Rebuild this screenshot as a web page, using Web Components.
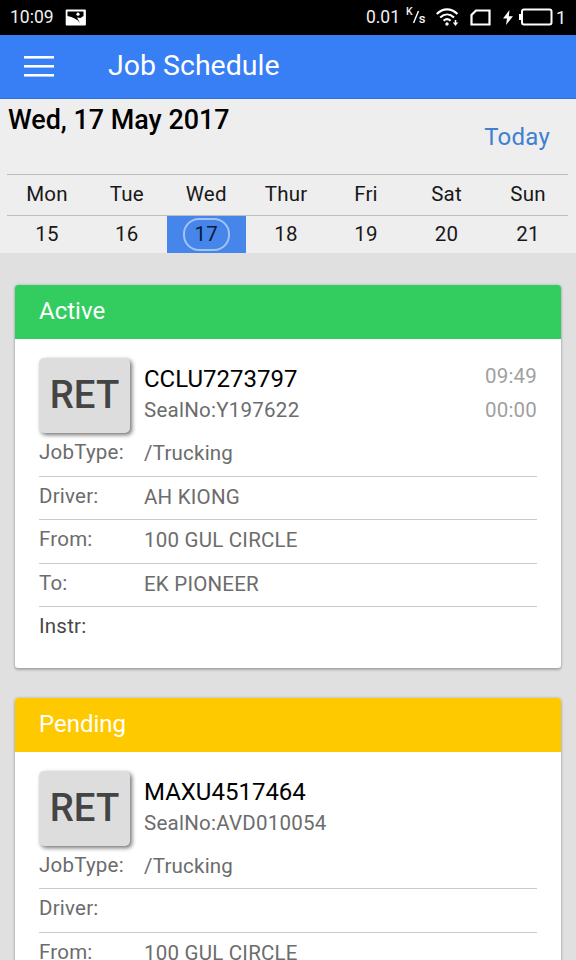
<!DOCTYPE html>
<html lang="en">
<head>
<meta charset="utf-8">
<title>Job Schedule</title>
<style>
  html, body {
    margin: 0;
    height: 960px;
    overflow: hidden;
    background: #e0e0e0;
    font-family: Roboto, "Liberation Sans", sans-serif;
  }
</style>
</head>
<body>
<job-app></job-app>

<script>
class StatusBar extends HTMLElement {
  constructor() {
    super();
    this.attachShadow({ mode: 'open' });
    this.shadowRoot.innerHTML = `
      <style>
        :host {
          display: flex;
          align-items: center;
          height: 35px;
          box-sizing: border-box;
          padding: 0 10px 1px;
          background: #000;
          color: #f0f0f0;
          font-size: 17.5px;
        }
        svg { display: block; flex: none; }
        .picture { margin-left: 11px; }
        .speed { margin-left: auto; font-size: 17.5px; }
        .unit { display: flex; margin-left: 6px; font-weight: 500; line-height: 12px; width: 19px; }
        .unit span:first-child { margin-top: -3px; font-size: 10.5px; }
        .unit span:last-child { margin-top: 4px; font-size: 13px; }
        .unit svg { margin: 0 -1px; }
        .wifi { margin-left: 11px; }
        .sim { margin-left: 11px; }
        .bolt { margin-left: 12px; }
        .battery { margin-left: 6px; }
        .level { margin-left: 3px; width: 10px; font-size: 18px; }
      </style>
      <span>10:09</span>
      <svg class="picture" width="22" height="17" viewBox="0 0 22 17">
        <rect x="0.7" y="0.6" width="20.2" height="15.8" rx="1" fill="#fff"/>
        <path d="M2.5 2.5h16v4.500L15.500 9 12 8.500l3 5.500C12 10 8 8 2.500 7z" fill="#000"/>
        <circle cx="13" cy="5.200" r="1.600" fill="#fff"/>
      </svg>
      <span class="speed">0.01</span>
      <span class="unit"><span>K</span><svg width="8" height="15" viewBox="0 0 8 15"><path d="M1.500 14L6.500 2" stroke="#fff" stroke-width="1.400"/></svg><span>s</span></span>
      <svg class="wifi" width="23" height="19" viewBox="0 0 23 19" fill="none" stroke="#fff" stroke-width="2.200">
        <path d="M0.800 6C7-0.300 15-0.300 21.500 6M4.200 9.500c4.200-4 9.600-4 13.800 0M7.600 12.800c2.200-2 4.800-2 7 0"/>
        <circle cx="11" cy="16" r="1.700" fill="#fff" stroke="none"/>
        <path d="M19.500 12v4" stroke-width="1.600"/>
        <path d="M16.800 14.500h5.400l-2.700 3.500z" fill="#fff" stroke="none"/>
      </svg>
      <svg class="sim" width="21" height="17" viewBox="0 0 21 17" fill="none" stroke="#fff" stroke-width="2.200">
        <path d="M6 1.500h13.500v14h-18V6z"/>
      </svg>
      <svg class="bolt" width="10" height="15" viewBox="0 0 10 15" fill="#fff"><path d="M6.500 0L0 8.500h4L3 15l7-8.800H5.800z"/></svg>
      <svg class="battery" width="34" height="18" viewBox="0 0 34 18">
        <rect x="3" y="1.500" width="29.500" height="15" rx="2" fill="none" stroke="#fff" stroke-width="2"/>
        <path d="M0 6h3v6H0z" fill="#fff"/>
      </svg>
      <span class="level">1</span>
    `;
  }
}

class TitleBar extends HTMLElement {
  constructor() {
    super();
    this.attachShadow({ mode: 'open' });
    this.shadowRoot.innerHTML = `
      <style>
        :host {
          display: flex;
          align-items: center;
          height: 64px;
          box-sizing: border-box;
          padding: 0 24px 2px;
          background: #387ef5;
          border-bottom: 1px solid #3371dc;
          color: #fff;
        }
        .menu { display: grid; gap: 7px; width: 30px; margin-right: 54px; padding-top: 1px; }
        .menu i { height: 2px; border-bottom: 1px solid #a9c8fa; margin-bottom: -1px; background: #fff; }
        h1 { margin: 0; font-size: 28.500px; font-weight: 400; line-height: 40px; }
      </style>
      <div class="menu"><i></i><i></i><i></i></div>
      <h1><slot></slot></h1>
    `;
  }
}

class WeekCalendar extends HTMLElement {
  connectedCallback() {
    this.attachShadow({ mode: 'open' });
    const days = ['Mon', 'Tue', 'Wed', 'Thur', 'Fri', 'Sat', 'Sun'];
    const first = Number(this.getAttribute('first'));
    const selected = Number(this.getAttribute('selected'));
    this.shadowRoot.innerHTML = `
      <style>
        :host {
          display: block;
          height: 154px;
          box-sizing: border-box;
          padding: 0 8px 0 7px;
          background: #eee;
          color: #181818;
        }
        .top { display: flex; justify-content: space-between; height: 75px; }
        h2 { margin: 1px 0 0 1px; font-size: 26.900px; font-weight: 500; line-height: 40px; color: #000; }
        .today { margin: 18px 18px 0 0; font-size: 24px; letter-spacing: .25px; line-height: 40px; color: #3f80d0; }
        .week {
          display: grid;
          grid-template-columns: 80px 79.500px 79.500px 80px 80px 81px 1fr;
          border-top: 1px solid #bdbdbd;
          text-align: center;
          font-size: 20.500px;
          letter-spacing: .2px;
        }
        .names { height: 40px; line-height: 38px; }
        .names div:last-child, .dates div:last-child { padding-left: 1px; }
        .dates { height: 37px; line-height: 37px; }
        .on { display: grid; place-items: center; background: #4686ea; }
        .on span {
          width: 43px;
          height: 29px;
          border: 2px solid #a4c3f4;
          border-radius: 16px;
          line-height: 28px;
          color: #0b1830;
        }
      </style>
      <div class="top">
        <h2><slot></slot></h2>
        <div class="today">Today</div>
      </div>
      <div class="week names">${days.map(d => `<div>${d}</div>`).join('')}</div>
      <div class="week dates">${days.map((d, i) => {
        const n = first + i;
        return n === selected ? `<div class="on"><span>${n}</span></div>` : `<div>${n}</div>`;
      }).join('')}</div>
    `;
  }
}

class JobRow extends HTMLElement {
  connectedCallback() {
    this.attachShadow({ mode: 'open' });
    this.shadowRoot.innerHTML = `
      <style>
        :host {
          display: grid;
          grid-template-columns: 105px 1fr;
          height: 43.500px;
          box-sizing: border-box;
          border-bottom: 1px solid #c9c9c9;
          font-size: 20.500px;
          letter-spacing: .22px;
          color: #6c6c6c;
        }
        :host([last]) { border: 0; color: #484848; }
        .label { line-height: 38px; }
        .value { line-height: 41px; }
      </style>
      <div class="label">${this.getAttribute('label')}</div>
      <div class="value"><slot></slot></div>
    `;
  }
}

class JobCard extends HTMLElement {
  connectedCallback() {
    this.attachShadow({ mode: 'open' });
    const times = (this.getAttribute('times') || '').split(' ').filter(Boolean);
    this.shadowRoot.innerHTML = `
      <style>
        :host {
          display: block;
          height: 382.500px;
          border-radius: 3px;
          overflow: hidden;
          background: #fff;
          box-shadow: 0 2px 3px rgba(0, 0, 0, .22), 0 0 3px rgba(0, 0, 0, .2);
        }
        header {
          height: 54px;
          padding: 0 24px;
          background: var(--status-color);
          color: #fff;
          font-size: 24px;
          line-height: 53px;
        }
        .body { padding: 19px 24px 0; }
        .summary { display: flex; height: 75px; }
        .badge {
          width: 91px;
          height: 75px;
          border-radius: 5px;
          background: #ddd;
          box-shadow: 2px 2px 4px rgba(0, 0, 0, .55);
          color: #444;
          font-size: 38.300px;
          font-weight: 500;
          line-height: 73px;
          text-align: center;
        }
        .info { flex: 1; margin-left: 14px; padding-top: 6px; }
        .container { font-size: 24px; line-height: 31px; color: #000; }
        .seal { font-size: 20.500px; letter-spacing: .25px; line-height: 31px; color: #6c6c6c; }
        .times { padding-top: .5px; font-size: 20.500px; letter-spacing: .2px; line-height: 34.500px; color: #a0a0a0; }
      </style>
      <header>${this.getAttribute('status')}</header>
      <div class="body">
        <div class="summary">
          <div class="badge">RET</div>
          <div class="info">
            <div class="container">${this.getAttribute('container')}</div>
            <div class="seal">SealNo:${this.getAttribute('seal')}</div>
          </div>
          <div class="times">${times.map(t => `<div>${t}</div>`).join('')}</div>
        </div>
        <slot></slot>
      </div>
    `;
  }
}

class JobApp extends HTMLElement {
  constructor() {
    super();
    this.attachShadow({ mode: 'open' });
    this.shadowRoot.innerHTML = `
      <style>
        :host { display: block; width: 576px; height: 960px; overflow: hidden; }
        main { display: grid; gap: 30px; padding: 32px 15px; }
        .active { --status-color: #33cd5f; }
        .pending { --status-color: #ffc900; }
      </style>
      <status-bar></status-bar>
      <title-bar>Job Schedule</title-bar>
      <week-calendar first="15" selected="17">Wed, 17 May 2017</week-calendar>
      <main>
        <job-card class="active" status="Active" container="CCLU7273797" seal="Y197622" times="09:49 00:00">
          <job-row label="JobType:">/Trucking</job-row>
          <job-row label="Driver:">AH KIONG</job-row>
          <job-row label="From:">100 GUL CIRCLE</job-row>
          <job-row label="To:">EK PIONEER</job-row>
          <job-row label="Instr:" last></job-row>
        </job-card>
        <job-card class="pending" status="Pending" container="MAXU4517464" seal="AVD010054">
          <job-row label="JobType:">/Trucking</job-row>
          <job-row label="Driver:"></job-row>
          <job-row label="From:">100 GUL CIRCLE</job-row>
        </job-card>
      </main>
    `;
  }
}

customElements.define('status-bar', StatusBar);
customElements.define('title-bar', TitleBar);
customElements.define('week-calendar', WeekCalendar);
customElements.define('job-row', JobRow);
customElements.define('job-card', JobCard);
customElements.define('job-app', JobApp);
</script>
</body>
</html>
